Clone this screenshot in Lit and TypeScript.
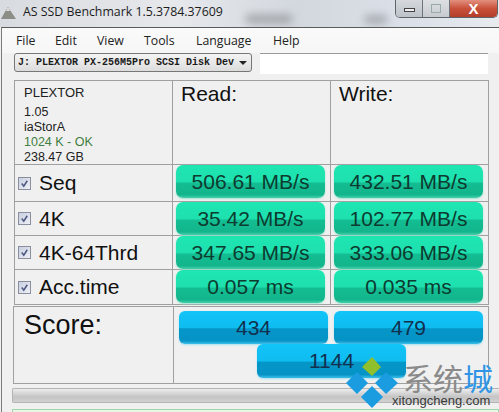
import { LitElement, html, css } from "lit";
import { customElement } from "lit/decorators.js";

const rows = [
  ["Seq", "506.61 MB/s", "432.51 MB/s"],
  ["4K", "35.42 MB/s", "102.77 MB/s"],
  ["4K-64Thrd", "347.65 MB/s", "333.06 MB/s"],
  ["Acc.time", "0.057 ms", "0.035 ms"],
] as const;

@customElement("app-root")
export class AppRoot extends LitElement {
  static styles = css`
    :host { display: block; width: 499px; height: 412px; overflow: hidden; position: relative; font-family: "Liberation Sans", Arial, sans-serif; background: #f0f0f0; color: #111; }
    .title { height: 27px; box-sizing: border-box; display: flex; align-items: flex-start; background: linear-gradient(90deg, #d8dbdf 0%, #e6e8ec 35%, #d3d8de 60%, #dde2ea 85%, #e8ebee 100%); position: relative; overflow: hidden; }
    .blob { position: absolute; filter: blur(4px); background: #8b8f93; border-radius: 6px; opacity: .65; }
    .b1 { left: 245px; top: 14px; width: 48px; height: 10px; }
    .b2 { left: 364px; top: 15px; width: 24px; height: 9px; }
    .logo { width: 15px; height: 12px; margin: 7px 0 0 1px; flex: none; }
    .title-text { font: 12.35px/1 "Open Sans", sans-serif; margin: 6px 0 0 7px; color: #1c1c1c; white-space: nowrap; position: relative; }
    .ctrls { margin-left: auto; margin-right: 1px; display: flex; height: 17px; border: 1px solid #5f6469; border-top: 0; border-radius: 0 0 5px 5px; overflow: hidden; position: relative; }
    .ctrl { display: flex; align-items: center; justify-content: center; width: 26px; background: linear-gradient(#d5d9dd, #bcc2c8); border-right: 1px solid #6f7479; }
    .ctrl.max { width: 26px; background: linear-gradient(#dde0e3, #c7cbcf); }
    .close { width: 47px; border: 0; background: linear-gradient(#e2907f, #c9503a 50%, #b23f2b); color: #fff; font: bold 15px/1 "Liberation Sans", sans-serif; }
    .min-i { width: 9px; height: 2px; border: 1px solid #444; background: #eee; margin-top: 3px; }
    .max-i { width: 8px; height: 7px; border: 1px solid #9aa; }
    .win { margin-left: 1px; border-left: 1px solid #7b7b7b; border-top: 1px solid #5a5a5a; height: 385px; box-sizing: border-box; }
    .menu { height: 25px; display: flex; align-items: center; background: linear-gradient(#fafafa, #f6f6f6); font: 12.3px "Open Sans", sans-serif; color: #222; padding: 0 0 0 14px; }
    .menu span:nth-child(1) { width: 39px; }
    .menu span:nth-child(2) { width: 42px; }
    .menu span:nth-child(3) { width: 47px; }
    .menu span:nth-child(4) { width: 52px; }
    .menu span:nth-child(5) { width: 77px; }
    .bar { display: flex; align-items: flex-start; height: 27px; padding-left: 12px; gap: 8px; background: #f0f0f0; }
    .combo { width: 238px; height: 19px; box-sizing: border-box; border: 1px solid #777; border-radius: 3px; background: linear-gradient(#f4f4f4, #dcdcdc); font: bold 10px/17px "Liberation Mono", monospace; padding-left: 3px; display: flex; justify-content: space-between; align-items: center; white-space: nowrap; overflow: hidden; color: #1a1a1a; }
    .combo b { width: 0; height: 0; border: 4px solid transparent; border-top: 4px solid #222; border-bottom: 0; margin-right: 4px; flex: none; }
    .input { width: 228px; height: 21px; box-sizing: border-box; background: #fff; border-top: 1px solid #999; }
    .grid { display: grid; grid-template-columns: 158px 158px 158px; grid-template-rows: 84px 37px 34px 34px 35px; width: 475px; margin-left: 12px; border: 1px solid #a0a0a0; border-width: 1px 1px 0 1px; box-sizing: border-box; }
    .cell { border-right: 1px solid #a0a0a0; border-bottom: 1px solid #a0a0a0; box-sizing: border-box; min-width: 0; }
    .cell:nth-child(3n) { border-right: 0; }
    .info { padding: 3px 0 0 9px; font-size: 12.5px; line-height: 15px; color: #222; }
    .info .name { font-size: 13px; line-height: 17px; margin-bottom: 3px; }
    .info .fw { line-height: 16px; }
    .ok { color: #3f7f3f; }
    .head { font-size: 21px; line-height: 24px; padding: 1px 0 0 8px; color: #111; }
    .lab { display: flex; align-items: center; font-size: 21px; padding-left: 3px; gap: 8px; color: #111; }
    .cb { width: 13px; height: 13px; box-sizing: border-box; border: 1px solid #8a8fa0; background: linear-gradient(135deg, #c8cfe0, #eef0f6); display: flex; color: #4a5680; }
    .cb svg { width: 11px; height: 11px; }
    .val { display: flex; align-items: flex-start; padding-left: 3px; }
    .pill { width: 149px; height: 33px; border-radius: 7px; display: flex; align-items: center; justify-content: center; font-size: 21px; color: #0d3b30; white-space: nowrap; background: linear-gradient(#1ee6b2 0%, #1ee0ae 52%, #14bd92 54%, #12b58c 90%, #45d0ac 100%); box-shadow: 0 1px 2px #9fe5d0; }
    .score { display: grid; grid-template-columns: 160px 158px 156px; width: 476px; margin: 1px 0 0 11px; height: 78px; border: 1px solid #a0a0a0; box-sizing: border-box; }
    .score-l { font-size: 27px; line-height: 30px; padding: 3px 0 0 10px; border-right: 1px solid #a0a0a0; color: #111; }
    .score-r { grid-column: span 2; display: grid; grid-template-columns: 149px 149px; column-gap: 6px; padding: 4px 0 0 5px; align-content: start; }
    .blue { height: 33px; border-radius: 6px; display: flex; align-items: center; justify-content: center; font-size: 21px; color: #12304e; background: linear-gradient(#12c4f8 0%, #0fbcf0 50%, #0596c8 54%, #0693c6 90%, #3cc0ea 100%); box-shadow: 0 1px 2px #a8dff0; }
    .total { grid-column: 1 / span 2; width: 149px; margin: 0 0 0 78px; height: 34px; }
    .progress { height: 15px; margin: 4px 0 0 10px; border: 1px solid #b4b4b4; border-right: 0; border-radius: 2px 0 0 2px; box-sizing: border-box; background: linear-gradient(#ededed 0%, #dcdcdc 25%, #c4c4c4 60%, #d2d2d2 100%); }
    .green { height: 4px; margin: 6px 0 0 10px; border: 1px solid #9fd8a8; background: #e8f6e8; }
    .wm { position: absolute; left: 346px; top: 357px; width: 153px; height: 55px; }
    .wm svg { position: absolute; left: 0; top: 0; width: 52px; height: 51px; }
    .wm .cn { position: absolute; left: 57px; top: 5px; font: 30px/30px "Noto Sans CJK SC", sans-serif; white-space: nowrap; color: #8a8a8a; }
    .wm .cn i { font-style: normal; color: #2f95e4; }
    .wm .en { position: absolute; left: 46px; top: 37px; font: 13px/14px "Liberation Sans", sans-serif; color: #3a3a3a; white-space: nowrap; }
  `;

  render() {
    return html`
      <div class="title">
        <i class="blob b1"></i><i class="blob b2"></i>
        <svg class="logo" viewBox="0 0 15 12"><path d="M0 12 L5 3 L7 0 L9 3 L15 12 Z" fill="#8d8d88"/><path d="M6 1 L8 1 L9 4 L5 4 Z" fill="#d8d8d8"/></svg>
        <span class="title-text">AS SSD Benchmark 1.5.3784.37609</span>
        <div class="ctrls">
          <div class="ctrl"><i class="min-i"></i></div>
          <div class="ctrl max"><i class="max-i"></i></div>
          <div class="ctrl close">X</div>
        </div>
      </div>
      <div class="win">
        <div class="menu"><span>File</span><span>Edit</span><span>View</span><span>Tools</span><span>Language</span><span>Help</span></div>
        <div class="bar">
          <div class="combo"><span>J: PLEXTOR PX-256M5Pro SCSI Disk Dev</span><b></b></div>
          <div class="input"></div>
        </div>
        <div class="grid">
          <div class="cell info">
            <div class="name">PLEXTOR</div>
            <div class="fw">1.05</div><div>iaStorA</div><div class="ok">1024 K - OK</div><div>238.47 GB</div>
          </div>
          <div class="cell head">Read:</div>
          <div class="cell head">Write:</div>
          ${rows.map((r) => html`
            <div class="cell lab"><span class="cb"><svg viewBox="0 0 12 12"><path d="M3 6 L5.2 9 L9 3" fill="none" stroke="currentColor" stroke-width="1.6"/></svg></span><span>${r[0]}</span></div>
            <div class="cell val"><div class="pill">${r[1]}</div></div>
            <div class="cell val"><div class="pill">${r[2]}</div></div>
          `)}
        </div>
        <div class="score">
          <div class="score-l">Score:</div>
          <div class="score-r">
            <div class="blue">434</div><div class="blue">479</div>
            <div class="blue total">1144</div>
          </div>
        </div>
        <div class="progress"></div>
        <div class="green"></div>
      </div>
      <div class="wm">
        <svg viewBox="0 0 52 51">
          <path d="M26 0 L35 10 L26 19 L16 10 Z" fill="#8fbf2a"/>
          <path d="M11 15 L22 26 L11 37 L0 26 Z" fill="#1b9be0"/>
          <path d="M40 15 L52 26 L40 37 L29 26 Z" fill="#1b9be0"/>
          <path d="M26 29 L37 40 L26 51 L15 40 Z" fill="#1b9be0"/>
        </svg>
        <div class="cn">系统<i>城</i></div>
        <div class="en">xitongcheng.com</div>
      </div>
    `;
  }
}
